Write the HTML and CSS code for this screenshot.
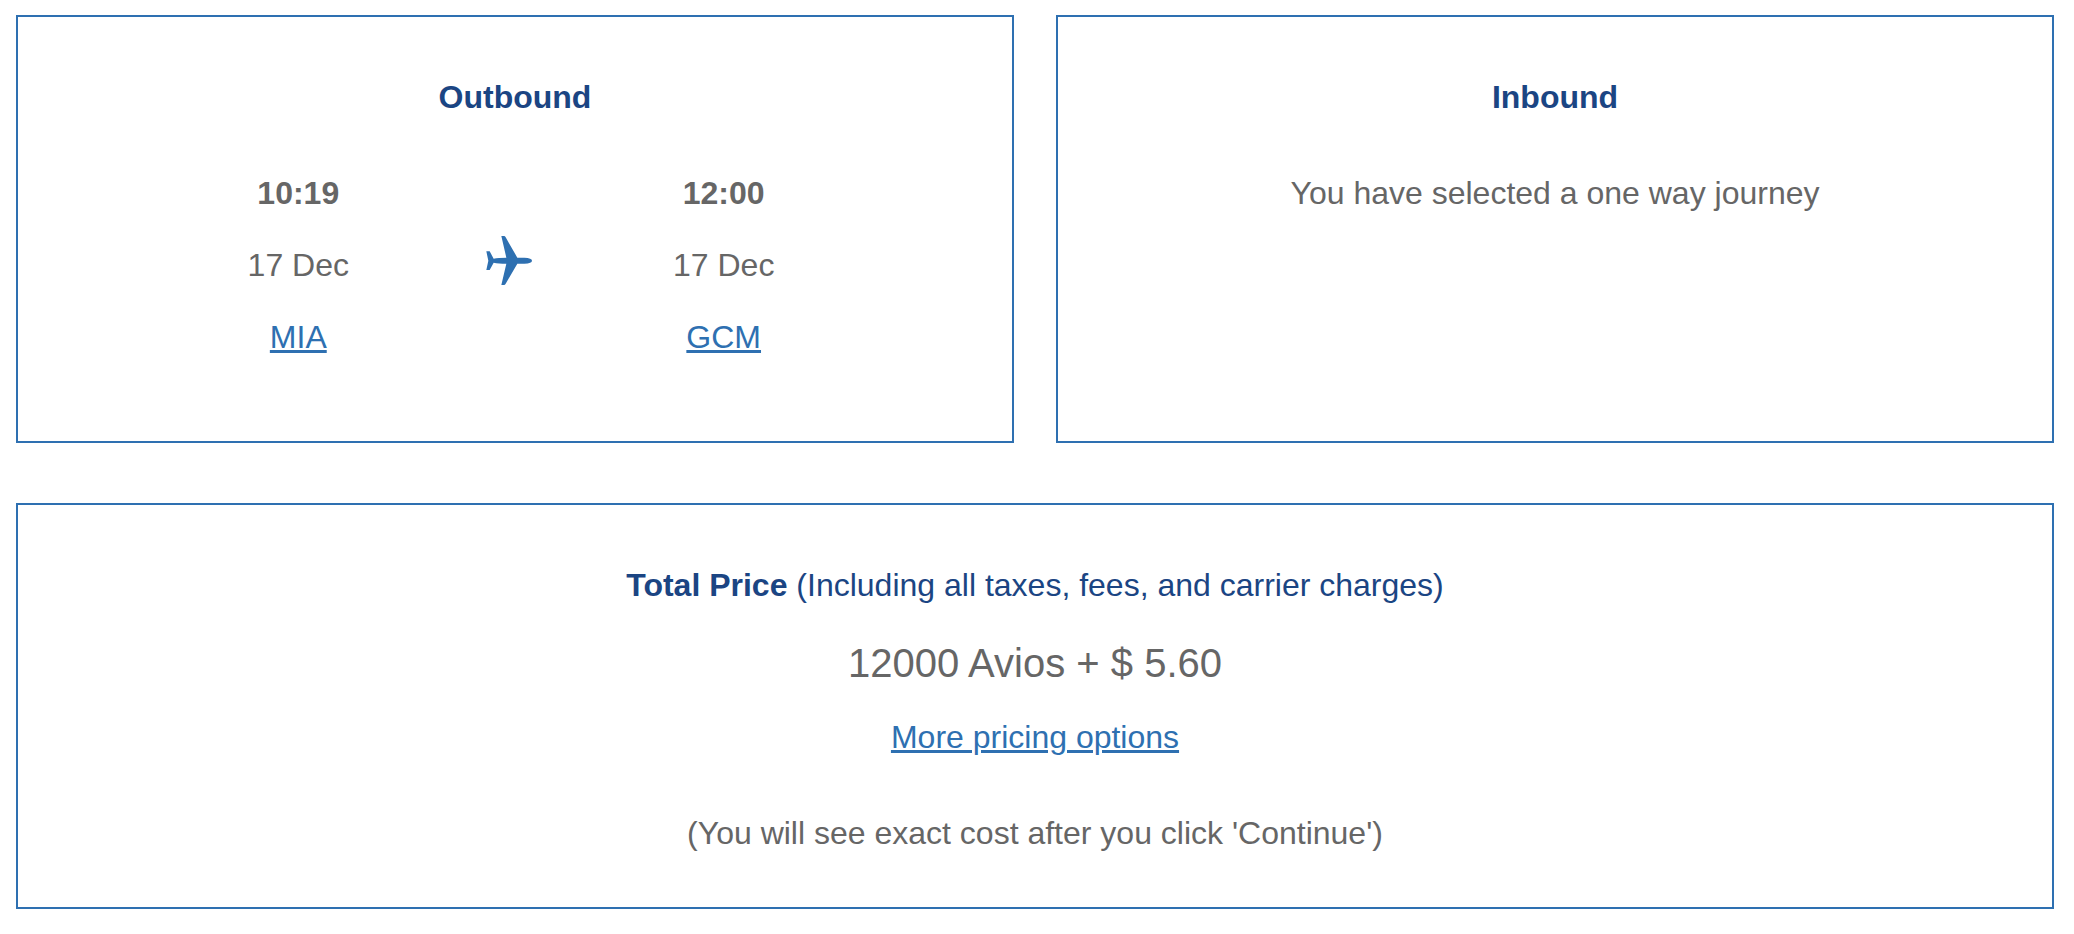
FILE: index.html
```html
<!DOCTYPE html>
<html lang="en">
<head>
    <meta charset="UTF-8">
    <meta name="viewport" content="width=device-width, initial-scale=1.0">
    <title>Journey Summary</title>
    <link rel="stylesheet" href="styles.css">
</head>
<body>
    <main class="summary">
        <div class="journeys">
            <section class="panel">
                <h2>Outbound</h2>
                <div class="flight">
                    <div class="stop">
                        <p class="time">10:19</p>
                        <p>17 Dec</p>
                        <p><a href="#">MIA</a></p>
                    </div>
                    <svg class="plane" viewBox="51 45 150 180" aria-hidden="true">
                        <path d="M97 48H105Q108 48 110 52L145 113H166Q189 114 189 122Q189 130 166 131H145L110 191Q108 195 105 195H97L112 131Q88 131 74 128L62 150H52L58 122L52 94H62L74 116Q88 113 112 113Z"/>
                    </svg>
                    <div class="stop">
                        <p class="time">12:00</p>
                        <p>17 Dec</p>
                        <p><a href="#">GCM</a></p>
                    </div>
                </div>
            </section>

            <section class="panel">
                <h2>Inbound</h2>
                <p>You have selected a one way journey</p>
            </section>
        </div>

        <section class="panel price-panel">
            <h2>Total Price <span>(Including all taxes, fees, and carrier charges)</span></h2>
            <p class="price">12000 Avios + $ 5.60</p>
            <p><a href="#">More pricing options</a></p>
            <p class="note">(You will see exact cost after you click 'Continue')</p>
        </section>
    </main>
</body>
</html>
```
FILE: styles.css
```css
* {
    box-sizing: border-box;
}

body {
    margin: 0;
    font-family: "Liberation Sans", Arial, sans-serif;
    font-size: 32px;
    line-height: 48px;
    color: #666;
    background-color: #fff;
    text-align: center;
}

.summary {
    padding: 15px 20px 24px 16px;
}

.journeys {
    display: grid;
    grid-template-columns: 1fr 1fr;
    gap: 42px;
    margin-bottom: 60px;
}

.panel {
    padding: 56px 0 80px;
    border: 2px solid #2e70b1;
}

h2 {
    margin: 0 0 48px;
    font-size: 32px;
    color: #1b4583;
}

h2 span {
    font-weight: normal;
}

p {
    margin: 0;
}

a {
    color: #2e70b1;
    text-decoration: underline;
    text-decoration-thickness: 3px;
    text-underline-offset: 2px;
}

.flight {
    display: grid;
    grid-template-columns: repeat(3, 1fr);
    align-items: center;
    padding-right: 8px;
    margin: 0 17.5%;
}

.stop {
    display: grid;
    gap: 24px;
}

.time {
    font-weight: bold;
}

.plane {
    width: 50px;
    height: 60px;
    justify-self: center;
    fill: #2e70b1;
}

.price-panel {
    padding-bottom: 50px;
}

.price-panel h2 {
    margin-bottom: 24px;
}

.price {
    margin-bottom: 20px;
    font-size: 40px;
    line-height: 60px;
}

.note {
    margin-top: 48px;
}
```
